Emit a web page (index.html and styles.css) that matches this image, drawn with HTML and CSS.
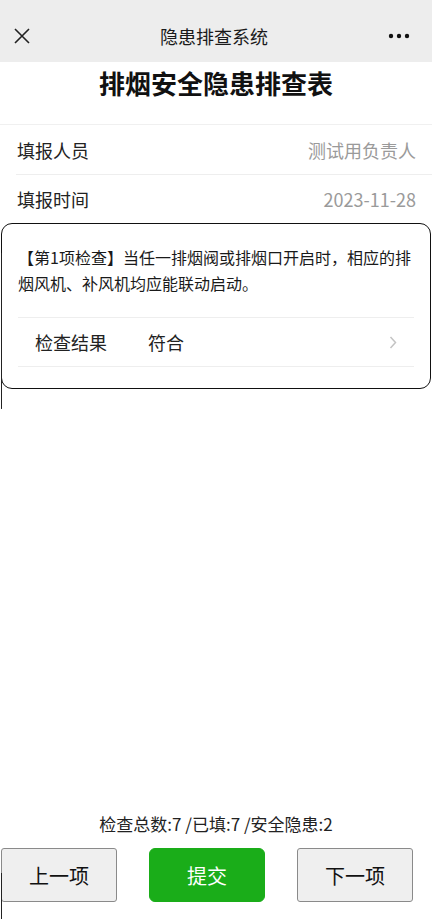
FILE: index.html
```html
<!DOCTYPE html>
<html lang="zh-CN">
<head>
<meta charset="utf-8">
<title>隐患排查系统</title>
<link rel="stylesheet" href="styles.css">
</head>
<body>
<div class="app">
  <header class="topbar">
    <span class="topbar-close">
      <svg width="16" height="16" viewBox="0 0 16 16"><path d="M1 1 L15 15 M15 1 L1 15" stroke="#222" stroke-width="1.6" fill="none"/></svg>
    </span>
    <span class="topbar-title">隐患排查系统</span>
    <span class="topbar-more">
      <svg width="22" height="6" viewBox="0 0 22 6"><circle cx="3" cy="3" r="2.2" fill="#111"/><circle cx="11" cy="3" r="2.2" fill="#111"/><circle cx="19" cy="3" r="2.2" fill="#111"/></svg>
    </span>
  </header>
  <main class="page">
    <h1 class="heading">排烟安全隐患排查表</h1>
    <div class="cells">
      <div class="cell">
        <span class="cell-label">填报人员</span>
        <span class="cell-value">测试用负责人</span>
      </div>
      <div class="cell">
        <span class="cell-label">填报时间</span>
        <span class="cell-value">2023-11-28</span>
      </div>
    </div>
    <section class="card">
      <p class="card-text">【第1项检查】当任一排烟阀或排烟口开启时，相应的排烟风机、补风机均应能联动启动。</p>
      <div class="result">
        <span class="result-label">检查结果</span>
        <span class="result-value">符合</span>
        <svg class="chevron" width="8" height="13" viewBox="0 0 8 13"><path d="M1.5 1 L6.5 6.5 L1.5 12" stroke="#c4c4c4" stroke-width="1.5" fill="none"/></svg>
      </div>
    </section>
    <div class="spacer"></div>
    <footer class="footer">
      <div class="stats">检查总数:7 /已填:7 /安全隐患:2</div>
      <div class="buttons">
        <button class="btn btn-plain">上一项</button>
        <button class="btn btn-primary">提交</button>
        <button class="btn btn-plain">下一项</button>
      </div>
    </footer>
    <span class="edge edge-mid"></span>
    <span class="edge edge-bottom"></span>
  </main>
</div>
</body>
</html>
```

FILE: styles.css
```css
* { box-sizing: border-box; }
html, body {
  margin: 0;
  padding: 0;
  height: 100%;
}
body {
  font-family: "Noto Sans CJK SC", "Noto Sans", sans-serif;
  color: #222;
  background: #fff;
}
.app {
  display: flex;
  flex-direction: column;
  height: 919px;
}
.topbar {
  flex: 0 0 62px;
  background: #ededed;
  display: grid;
  grid-template-columns: 1fr auto 1fr;
  align-items: center;
  padding: 10px 18px 0 14px;
}
.topbar-close { display: flex; width: 16px; justify-self: start; }
.topbar-title {
  font-size: 18px;
  color: #1a1a1a;
}
.topbar-more { display: flex; justify-self: end; margin-right: 4px; }
.page {
  flex: 1;
  display: flex;
  flex-direction: column;
  position: relative;
  background: #fff;
}
.heading {
  margin: 0;
  height: 63px;
  font-size: 26px;
  font-weight: 700;
  text-align: center;
  line-height: 42px;
  color: #111;
  border-bottom: 1px solid #f0f0f0;
}
.cells {
  display: flex;
  flex-direction: column;
}
.cell {
  height: 49px;
  display: flex;
  align-items: center;
  justify-content: space-between;
  padding: 0 16px 0 17px;
  font-size: 18px;
}
.cell + .cell {
  border-top: 1px solid #eee;
  margin-left: 16px;
  padding-left: 1px;
}
.cell-label { color: #222; }
.cell-value { color: #9a9a9a; }
.card {
  margin: 0 1px;
  border: 1px solid #111;
  border-radius: 11px;
  padding: 20px 16px 21px 16px;
}
.card-text {
  margin: 0;
  font-size: 16px;
  line-height: 26px;
  color: #1a1a1a;
}
.result {
  margin-top: 21px;
  height: 50px;
  border-top: 1px solid #eee;
  border-bottom: 1px solid #eee;
  display: flex;
  align-items: center;
  padding: 0 17px;
  font-size: 18px;
}
.result-label { width: 113px; color: #222; }
.result-value { flex: 1; color: #222; }
.chevron { display: block; }
.spacer { flex: 1; }
.footer {
  display: flex;
  flex-direction: column;
  align-items: center;
  padding-bottom: 17px;
}
.stats {
  font-size: 17px;
  color: #222;
  line-height: 24px;
  margin-bottom: 12px;
}
.buttons {
  width: 100%;
  display: flex;
  justify-content: space-between;
  padding: 0 19px 0 1px;
}
.btn {
  font-family: inherit;
  width: 116px;
  height: 54px;
  font-size: 20px;
  border-radius: 3px;
  cursor: pointer;
}
.btn-plain {
  background: #efefef;
  border: 1px solid #8a8a8a;
  color: #111;
}
.btn-primary {
  background: #1aad19;
  border: 1px solid #1aad19;
  border-radius: 6px;
  color: #fff;
}
.edge {
  position: absolute;
  left: 1px;
  width: 1px;
  background: #222;
}
.edge-mid { top: 191px; height: 156px; border-radius: 0 0 1px 1px; }
.edge-bottom { top: 811px; bottom: 0; }
```
